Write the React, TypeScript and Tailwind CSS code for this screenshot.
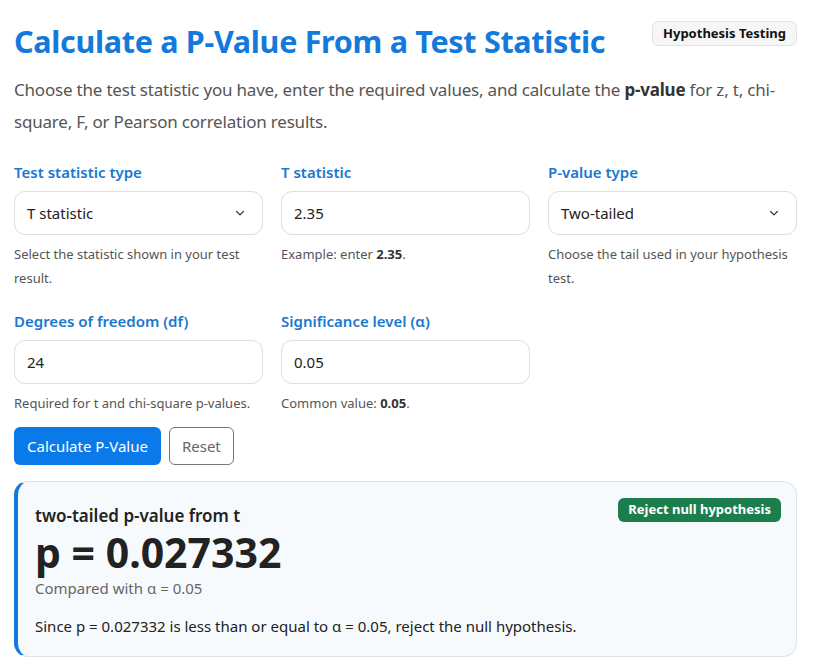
import React from "react";

function Chevron() {
  return (
    <svg width="12" height="12" viewBox="0 0 16 16" fill="none" stroke="#333" strokeWidth="1.6" strokeLinecap="round" strokeLinejoin="round">
      <path d="M3.5 6l4.5 4.5L12.5 6" />
    </svg>
  );
}

function Field({ label, value, select, help }: { label: string; value: string; select?: boolean; help: React.ReactNode }) {
  return (
    <div className="flex flex-col">
      <div className="text-[15px] font-semibold text-[#1a78cf] leading-[20px] mb-[9px]">{label}</div>
      <div className="h-[44px] rounded-[11px] border border-[#dedede] bg-white flex items-center justify-between pl-[12px] pr-[16px] text-[15px] text-[#222]">
        <span>{value}</span>
        {select && <Chevron />}
      </div>
      <div className="mt-[7px] text-[13px] leading-[24px] text-[#555]">{help}</div>
    </div>
  );
}

export default function App() {
  return (
    <div className="bg-white w-[822px] h-[663px] overflow-hidden" style={{ fontFamily: '"Noto Sans", "Open Sans", sans-serif' }}>
      <div className="pl-[14px] pr-[25px] pt-[18px]">
        <div className="flex items-start justify-between">
          <h1 className="text-[30.5px] font-bold text-[#1479dc] leading-[46px] tracking-[-0.3px]">Calculate a P-Value From a Test Statistic</h1>
          <div className="mt-[3px] px-[10px] h-[25px] flex items-center rounded-[6px] border border-[#e3e3e3] bg-[#f6f6f6] text-[13px] font-bold text-[#111]">Hypothesis Testing</div>
        </div>
        <p className="mt-[10px] text-[17px] leading-[32px] text-[#555] tracking-[-0.2px]">
          Choose the test statistic you have, enter the required values, and calculate the <b className="text-[#333]">p-value</b> for z, t, chi-square, F, or Pearson correlation results.
        </p>
        <div className="mt-[24px] grid grid-cols-3 gap-x-[18px] gap-y-[21px]">
          <Field label="Test statistic type" value="T statistic" select help="Select the statistic shown in your test result." />
          <Field label="T statistic" value="2.35" help={<>Example: enter <b className="text-[#333]">2.35</b>.</>} />
          <Field label="P-value type" value="Two-tailed" select help="Choose the tail used in your hypothesis test." />
          <Field label="Degrees of freedom (df)" value="24" help="Required for t and chi-square p-values." />
          <Field label="Significance level (α)" value="0.05" help={<>Common value: <b className="text-[#333]">0.05</b>.</>} />
        </div>
        <div className="mt-[12px] flex gap-[8px]">
          <button className="h-[38px] px-[13px] rounded-[6px] bg-[#0b7ae9] text-white text-[15px]">Calculate P-Value</button>
          <button className="h-[38px] px-[12px] rounded-[6px] border border-[#777] bg-white text-[#666] text-[15px]">Reset</button>
        </div>
        <div className="mt-[16px] rounded-[14px] border border-[#dbe3ea] border-l-[4px] border-l-[#1479dc] bg-[#f7fafd] pl-[17px] pr-[15px] pt-[16px] pb-[18px]">
          <div className="flex items-start justify-between">
            <div className="mt-[6px] text-[17px] font-semibold text-[#222] leading-[24px]">two-tailed p-value from t</div>
            <div className="px-[10px] h-[24px] flex items-center rounded-[6px] bg-[#1c7d4d] text-white text-[13px] font-bold">Reject null hypothesis</div>
          </div>
          <div className="text-[41px] font-bold text-[#222] leading-[49px]">p = 0.027332</div>
          <div className="text-[15px] text-[#666] leading-[22px]">Compared with α = 0.05</div>
          <div className="mt-[15px] text-[15px] text-[#222] leading-[24px]">Since p = 0.027332 is less than or equal to α = 0.05, reject the null hypothesis.</div>
        </div>
      </div>
    </div>
  );
}
